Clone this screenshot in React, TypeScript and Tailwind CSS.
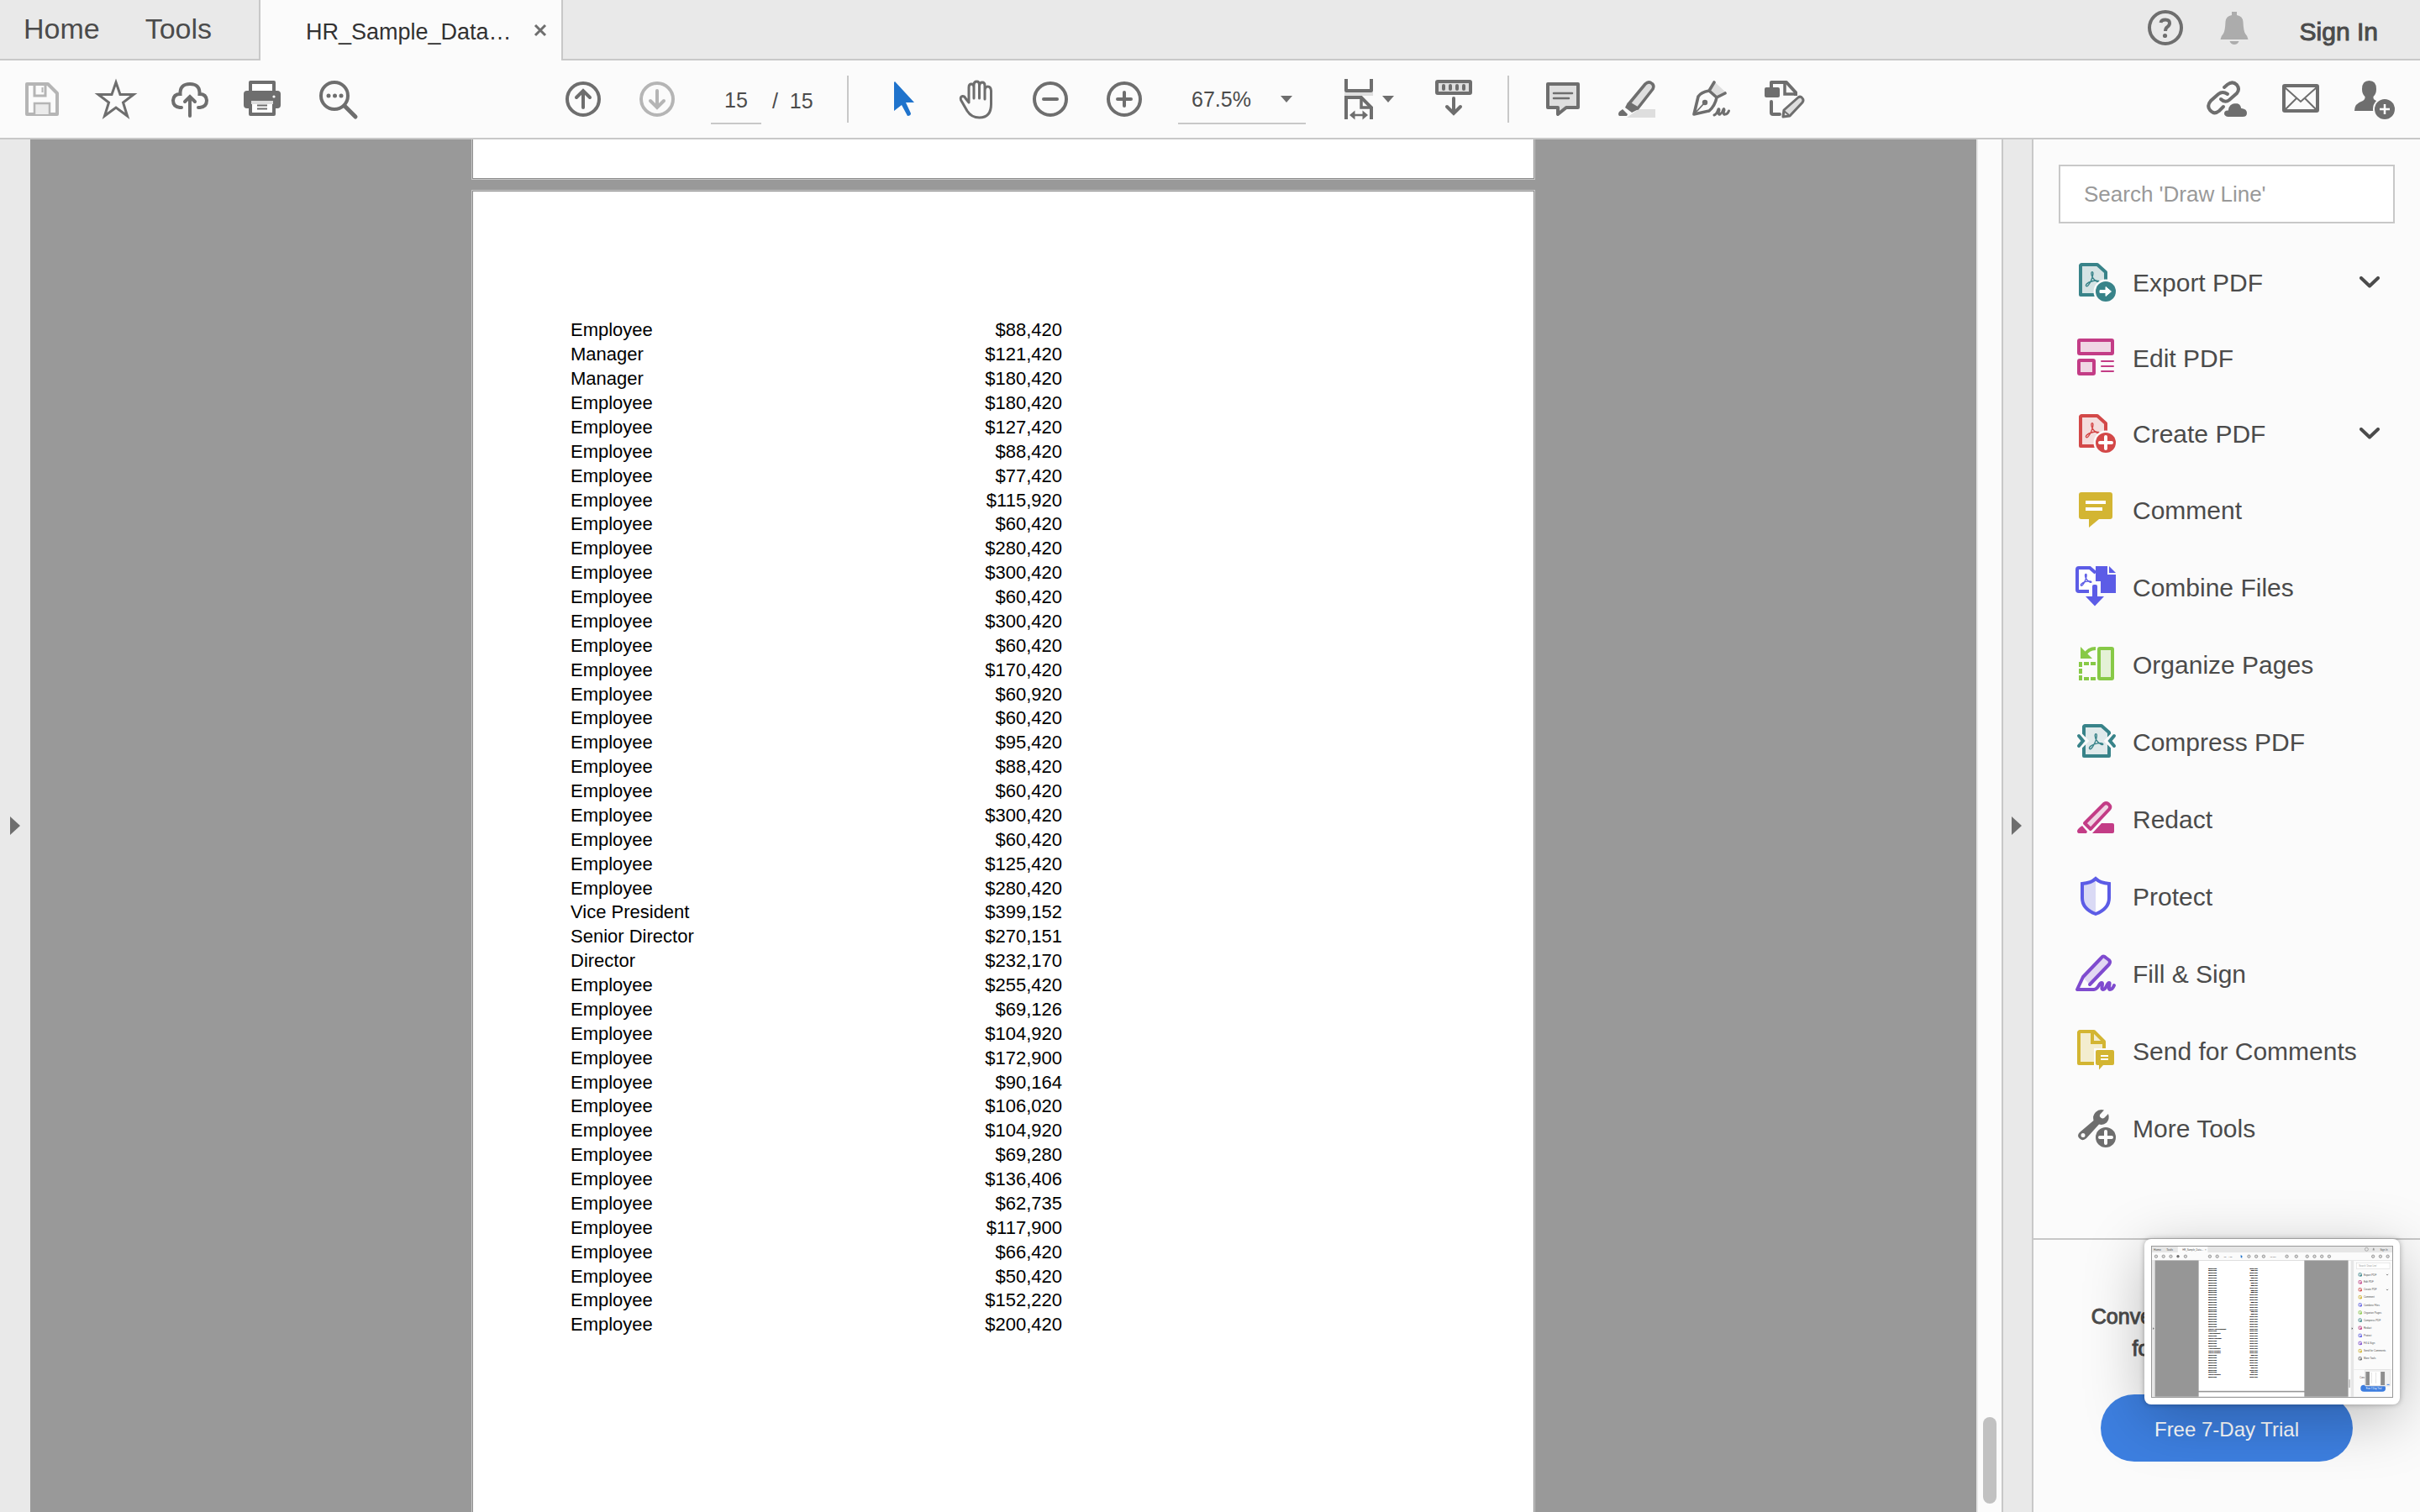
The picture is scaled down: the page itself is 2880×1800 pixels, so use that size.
import React from "react";

type IconProps = { children: React.ReactNode; className?: string };

function Icon({ children, className = "" }: IconProps) {
  return (
    <svg
      viewBox="0 0 48 48"
      className={"block size-12 shrink-0 overflow-visible " + className}
      fill="none"
      aria-hidden="true"
    >
      {children}
    </svg>
  );
}

function ToolButton({ label, children, disabled = false }: { label: string; children: React.ReactNode; disabled?: boolean }) {
  return (
    <button type="button" aria-label={label} disabled={disabled} className="size-12 shrink-0">
      <Icon>{children}</Icon>
    </button>
  );
}

const G = "#6e6e6e";
const L = "#dedede";

function Swirl({ color, x = 0, y = 0, s = 1 }: { color: string; x?: number; y?: number; s?: number }) {
  return (
    <path
      transform={`translate(${x} ${y}) scale(${s})`}
      d="M0.8 17.6C-0.6 16.2 2 13.6 7 12C11.600 10.600 16.200 10.800 16 12.400C15.800 14 10.800 11.400 8.400 7.400C6.600 4.200 6.400 0.600 8 0.600C9.800 0.600 8.600 6.400 6.600 11C4.600 15.400 2 18.800 0.800 17.600Z"
      stroke={color}
      strokeWidth={1.4 / s}
      strokeLinejoin="round"
    />
  );
}

function PdfDoc({ color, tint, children }: { color: string; tint: string; children: React.ReactNode }) {
  return (
    <>
      <path d="M7 3H26L36 12V39H6V4Z" fill={tint} stroke={color} strokeWidth="4" strokeLinejoin="round" />
      <Swirl color={color} x={12} y={11} />
      <circle cx="36" cy="35" r="14.500" fill="#fbfbfb" />
      <circle cx="36" cy="35" r="12" fill={color} />
      {children}
    </>
  );
}

const TEAL = "#388389";
const PINK = "#c33c86";
const RED = "#d34848";
const GOLD = "#d3b532";
const BLUE = "#5c5ce6";
const GREEN = "#87c947";
const PURPLE = "#7f4bcf";

const tools: { label: string; menu?: boolean; icon: React.ReactNode }[] = [
  {
    label: "Export PDF",
    menu: true,
    icon: (
      <PdfDoc color={TEAL} tint="#d5e3e4">
        <path d="M29 33.500H36V29.500L42.500 35L36 40.500V36.500H29Z" fill="#fff" stroke="#fff" strokeLinejoin="round" />
      </PdfDoc>
    ),
  },
  {
    label: "Edit PDF",
    icon: (
      <>
        <rect x="4" y="3" width="40" height="16" rx="1" fill="#f0d6e4" stroke={PINK} strokeWidth="4" />
        <rect x="4" y="27" width="18" height="16" rx="1" fill="#f0d6e4" stroke={PINK} strokeWidth="4" />
        <path d="M31 28H45M31 34H45M31 40H45" stroke={PINK} strokeWidth="2" strokeLinecap="round" />
      </>
    ),
  },
  {
    label: "Create PDF",
    menu: true,
    icon: (
      <PdfDoc color={RED} tint="#f4dddd">
        <path d="M36 28V42M29 35H43" stroke="#fff" strokeWidth="4" strokeLinecap="round" />
      </PdfDoc>
    ),
  },
  {
    label: "Comment",
    icon: (
      <>
        <path d="M7 3H41Q44 3 44 6V32Q44 35 41 35H28L16 45V35H7Q4 35 4 32V6Q4 3 7 3Z" fill={GOLD} />
        <path d="M12 15H36M12 23H32" stroke="#fff" strokeWidth="4" />
      </>
    ),
  },
  {
    label: "Combine Files",
    icon: (
      <>
        <path d="M16 29H4Q2 29 2 27V3Q2 1 4 1H17L24 7" stroke={BLUE} strokeWidth="4" fill="#fff" />
        <Swirl color={BLUE} x={6} y={8} s={0.8} />
        <path d="M24 -1H38V9H48V31H30V17H24Z" fill={BLUE} />
        <path d="M40 -1L48 7H40Z" fill={BLUE} />
        <path d="M20 23Q20 21 22 21H24Q26 21 26 23V35H34L23 46.500L12 35H20Z" fill={BLUE} />
      </>
    ),
  },
  {
    label: "Organize Pages",
    icon: (
      <>
        <rect x="28" y="5" width="16" height="36" rx="1" fill="#e4f1d6" stroke={GREEN} strokeWidth="4" />
        <path d="M6 3L11 8L20 17H6Z" fill={GREEN} />
        <path d="M24 5Q15 5 11 13" stroke={GREEN} strokeWidth="4" />
        <path
          d="M4 21h4v6h-4zM4 29h4v6h-4zM4 37h4v6h-4zM10 21h6v4h-6zM18 21h6v4h-6zM10 39h6v4h-6zM18 39h6v4h-6z"
          fill={GREEN}
        />
      </>
    ),
  },
  {
    label: "Compress PDF",
    icon: (
      <>
        <path d="M11 5H31L40 13V41H10V6Z" fill="#e0eaeb" stroke={TEAL} strokeWidth="4" strokeLinejoin="round" />
        <Swirl color={TEAL} x={16} y={14} s={1.05} />
        <path d="M3 16L10 23L3 30M47 16L40 23L47 30" stroke="#fbfbfb" strokeWidth="9" />
        <path d="M4 17L9 23L4 29M46 17L41 23L46 29" stroke={TEAL} strokeWidth="4" strokeLinecap="round" />
      </>
    ),
  },
  {
    label: "Redact",
    icon: (
      <>
        <path d="M11 29L34 6Q37 4 39.500 6.500Q42.500 9 40.500 12L18 36Z" fill="#f0d6e4" stroke={PINK} strokeWidth="4" strokeLinejoin="round" />
        <path d="M8 32L14 39L13 41H4Q2 41 2 38Q3 35 8 32Z" fill={PINK} />
        <path d="M20 41L31 29H44Q46 29 46 31V39Q46 41 44 41Z" fill={PINK} />
      </>
    ),
  },
  {
    label: "Protect",
    icon: (
      <>
        <path d="M24 3V45C16 42 8 36 8 26V9C14 8 20 7 24 3Z" fill="#dadaf5" />
        <path d="M24 3C28 7 34 8 40 9V26C40 36 32 42 24 45Z" fill="#fff" />
        <path d="M24 3C20 7 14 8.500 8 9V26C8 36 16 42 24 45C32 42 40 36 40 26V9C34 8.500 28 7 24 3Z" stroke={BLUE} strokeWidth="4" />
      </>
    ),
  },
  {
    label: "Fill & Sign",
    icon: (
      <>
        <path d="M9 29L31 5Q33 2 36 5L40 8Q42 10 40 13L17 37" fill="#e2d8f2" />
        <path
          d="M17 37L40 13Q42 10 40 8L36 5Q33 2 31 5L9 28L2 43H22C27 43 28 35 31 35C34 35 29 43 33 43C37 43 37 35 40 35C42 35 38 43 41 43Q44 43 46 38"
          stroke={PURPLE}
          strokeWidth="4"
          strokeLinecap="round"
          strokeLinejoin="round"
        />
      </>
    ),
  },
  {
    label: "Send for Comments",
    icon: (
      <>
        <path d="M5 1H22L34 13V39H4V2Z" fill="#f3edcf" stroke={GOLD} strokeWidth="4" strokeLinejoin="round" />
        <path d="M20 1V14H34" stroke={GOLD} strokeWidth="4" />
        <path d="M22 21H48V43H22Z" fill="#fbfbfb" />
        <path d="M26 23H44Q46 23 46 25V39Q46 41 44 41H33L28 46.500V41H26Q24 41 24 39V25Q24 23 26 23Z" fill={GOLD} />
        <path d="M30 30H39M30 34H39" stroke="#fff" strokeWidth="2" />
      </>
    ),
  },
  {
    label: "More Tools",
    icon: (
      <>
        <path
          d="M34 2.500L29 8Q28 10 30 11.500Q32 13 34 12L39 7Q41 13 37 17.500Q33 21 28 19.500L13 36Q9 40 5 36.500Q1 33 5 29L21.500 15Q20 9 24 5Q28 1 34 2.500ZM9 30A2.500 2.500 0 1 0 9 35A2.500 2.500 0 1 0 9 30Z"
          fill={G}
          fillRule="evenodd"
        />
        <circle cx="36" cy="35" r="14" fill="#fbfbfb" />
        <circle cx="36" cy="35" r="12" fill={G} />
        <path d="M36 28V42M29 35H43" stroke="#fff" strokeWidth="4" strokeLinecap="round" />
      </>
    ),
  },
];

const rows: [string, string][] = [
  ["Employee", "$88,420"],
  ["Manager", "$121,420"],
  ["Manager", "$180,420"],
  ["Employee", "$180,420"],
  ["Employee", "$127,420"],
  ["Employee", "$88,420"],
  ["Employee", "$77,420"],
  ["Employee", "$115,920"],
  ["Employee", "$60,420"],
  ["Employee", "$280,420"],
  ["Employee", "$300,420"],
  ["Employee", "$60,420"],
  ["Employee", "$300,420"],
  ["Employee", "$60,420"],
  ["Employee", "$170,420"],
  ["Employee", "$60,920"],
  ["Employee", "$60,420"],
  ["Employee", "$95,420"],
  ["Employee", "$88,420"],
  ["Employee", "$60,420"],
  ["Employee", "$300,420"],
  ["Employee", "$60,420"],
  ["Employee", "$125,420"],
  ["Employee", "$280,420"],
  ["Vice President", "$399,152"],
  ["Senior Director", "$270,151"],
  ["Director", "$232,170"],
  ["Employee", "$255,420"],
  ["Employee", "$69,126"],
  ["Employee", "$104,920"],
  ["Employee", "$172,900"],
  ["Employee", "$90,164"],
  ["Employee", "$106,020"],
  ["Employee", "$104,920"],
  ["Employee", "$69,280"],
  ["Employee", "$136,406"],
  ["Employee", "$62,735"],
  ["Employee", "$117,900"],
  ["Employee", "$66,420"],
  ["Employee", "$50,420"],
  ["Employee", "$152,220"],
  ["Employee", "$200,420"],
];

const previewTitles: Record<number, string> = {
  25: "Senior Vice President",
  27: "Vice President",
  29: "Senior Manager",
  33: "Vice President",
  34: "Senior Director",
  35: "Senior Director",
  44: "Senior Director",
};
const previewShort = [1, 4, 6, 7, 9, 10, 14, 18, 19, 36, 41, 43];

function PreviewPicture() {
  const icons = [50, 138, 226, 312, 402, 694, 782, 1162, 1250, 1338, 1617, 1730, 1860, 1948, 2036, 2124, 2650, 2738, 2826];
  const colors = [TEAL, PINK, RED, GOLD, BLUE, GREEN, TEAL, PINK, BLUE, PURPLE, GOLD, G];
  return (
    <svg viewBox="0 0 2880 1800" className="block w-full" fontFamily="'Liberation Sans', Arial, sans-serif" role="img" aria-label="Screen preview">
      <rect width="2880" height="1800" fill="#fbfbfb" />
      <rect width="2880" height="70" fill="#e6e6e6" />
      <rect x="310" width="358" height="72" fill="#fbfbfb" />
      <g fill="#4b4b4b">
        <text x="20" y="46" fontSize="34">Home</text>
        <text x="173" y="46" fontSize="34">Tools</text>
        <text x="364" y="48" fontSize="28">HR_Sample_Data…</text>
        <text x="634" y="46" fontSize="28">×</text>
        <text x="2733" y="48" fontSize="30">Sign In</text>
        <text x="862" y="128" fontSize="25">15</text>
        <text x="918" y="128" fontSize="25">/ 15</text>
        <text x="1417" y="128" fontSize="25">67.5%</text>
      </g>
      {icons.map((x, i) => (
        <circle key={x} cx={x} cy="118" r={i === 3 ? 14 : 17} stroke="#777" strokeWidth="7" fill={i === 3 ? "#666" : "#ddd"} />
      ))}
      <path d="M1064 97L1088 121L1078 122L1082 138L1064 132Z" fill="#1f73cc" />
      <circle cx="2572" cy="33" r="20" stroke="#777" strokeWidth="5" fill="none" />
      <path d="M2644 45L2650 18H2662L2668 45Z" fill="#999" />
      <rect y="164" width="2880" height="4" fill="#c8c8c8" />
      <rect y="166" width="36" height="1634" fill="#e6e6e6" />
      <rect x="36" y="166" width="2316" height="1634" fill="#969696" />
      <rect x="560" y="166" width="1266" height="1564" fill="#fff" />
      <rect x="560" y="1746" width="1266" height="54" fill="#fff" />
      <rect x="2384" y="166" width="34" height="1634" fill="#e6e6e6" />
      <rect x="2360" y="1590" width="16" height="104" rx="8" fill="#bbb" />
      <path d="M12 968L26 983L12 998ZM2394 968L2408 983L2394 998Z" fill="#555" />
      <g fontSize="22" fill="#111" stroke="#111" strokeWidth="1.500">
        {Array.from({ length: 46 }, (_, i) => (
          <g key={i}>
            <text x="678" y={268 + i * 29}>{previewTitles[i] ?? "Employee"}</text>
            <text x="1265" y={268 + i * 29} textAnchor="end">{previewShort.includes(i) ? "$88,420" : "$190,420"}</text>
          </g>
        ))}
      </g>
      <rect x="2450" y="196" width="400" height="68" fill="#fff" stroke="#ccc" strokeWidth="4" />
      <text x="2480" y="240" fontSize="26" fill="#999">Search 'Draw Line'</text>
      {tools.map((t, i) => {
        const y = i < 3 ? 337 + i * 90 : 607 + (i - 3) * 92;
        return (
          <g key={t.label}>
            <rect x="2478" y={y - 18} width="32" height="34" rx="6" stroke={colors[i]} strokeWidth="8" fill="#eee" />
            <rect x="2496" y={y} width="20" height="20" rx="8" fill={colors[i]} />
            <text x="2537" y={y + 11} fontSize="30" fill="#4b4b4b">{t.label}</text>
            {t.menu && <path d={`M2808 ${y - 5}L2820 ${y + 6}L2832 ${y - 5}`} stroke="#555" strokeWidth="7" fill="none" />}
          </g>
        );
      })}
      <rect x="2420" y="1474" width="460" height="3" fill="#c8c8c8" />
      <text x="2490" y="1576" fontSize="26" fill="#4b4b4b">Conve</text>
      <rect x="2500" y="1660" width="300" height="80" rx="40" fill="#3d7ddf" />
      <text x="2565" y="1709" fontSize="26" fill="#fff">Free 7-Day Trial</text>
      <rect x="2552" y="1476" width="304" height="196" rx="10" fill="#f2f2f2" stroke="#d8d8d8" strokeWidth="6" />
      <path d="M2562 1500H2608V1662H2562ZM2740 1500H2790V1662H2740Z" fill="#8e8e8e" />
      <path d="M2608 1500H2740V1662H2608Z" fill="#fff" />
      <path d="M2632 1510V1640M2684 1510V1640" stroke="#aaa" strokeWidth="5" strokeDasharray="6 3" />
      <rect x="2816" y="1650" width="30" height="10" fill="#3d7ddf" />
    </svg>
  );
}

function Header() {
  return (
    <header className="flex h-[72px] shrink-0 bg-[#e9e9e9] text-[#4b4b4b]">
      <nav className="flex w-[308px] items-start gap-[54px] border-b-2 border-[#c8c8c8] pl-7 text-[34px] leading-[68px]">
        <button type="button">Home</button>
        <button type="button">Tools</button>
      </nav>
      <div className="flex w-[362px] items-center border-x-2 border-[#c8c8c8] bg-[#fbfbfb] pt-1 pl-[54px] text-[27px] text-[#323232]">
        <button type="button" className="w-[270px] text-left whitespace-nowrap">HR_Sample_Data…</button>
        <button type="button" aria-label="Close tab" className="pb-1">
          <svg viewBox="0 0 18 18" className="size-[18px]" aria-hidden="true">
            <path d="M3 3L15 15M15 3L3 15" stroke={G} strokeWidth="3" />
          </svg>
        </button>
      </div>
      <div className="flex flex-1 items-center justify-end gap-[34px] border-b-2 border-[#c8c8c8] pr-[50px]">
        <button type="button" aria-label="Help" className="mb-1">
          <Icon>
            <circle cx="24" cy="24" r="19" stroke={G} strokeWidth="4" />
            <path d="M18.500 18Q19 14.500 24 14.500Q29 14.500 29 18.500Q29 21 26.500 22.800Q24 24.500 24 28" stroke={G} strokeWidth="4" />
            <circle cx="23.500" cy="33.500" r="2.600" fill={G} />
          </Icon>
        </button>
        <button type="button" aria-label="Notifications" className="mb-1">
          <Icon>
            <path d="M21 5H27V9Q34 10 34.500 17Q35 28 37 31Q40 34 40.500 38H7.500Q8 34 11 31Q13 28 13.500 17Q14 10 21 9Z" fill="#acacac" />
            <path d="M18.500 40H29.500Q28 44 24 44Q20 44 18.500 40Z" fill="#acacac" />
          </Icon>
        </button>
        <button type="button" className="ml-5 pt-1 text-[30px] [-webkit-text-stroke:1px]">Sign In</button>
      </div>
    </header>
  );
}

function Toolbar() {
  return (
    <div role="toolbar" aria-label="Document tools" className="flex h-[94px] shrink-0 items-center border-b-2 border-[#c8c8c8] bg-[#fbfbfb] pr-[30px] pl-[26px]">
      <div className="flex gap-10">
        <ToolButton label="Save" disabled>
          <path d="M6 6H31L42 17V42H6Z" stroke="#b5b5b5" strokeWidth="4" strokeLinejoin="round" />
          <path d="M15 6V20H28V6" stroke="#b5b5b5" strokeWidth="3" />
          <path d="M24.500 10V16" stroke="#b5b5b5" strokeWidth="2" />
          <path d="M15 42V29H33V42" fill="#ebebeb" stroke="#b5b5b5" strokeWidth="2.500" />
        </ToolButton>
        <ToolButton label="Bookmark">
          <path d="M24 4L29 18.500H45L32.500 28L37.500 44L24 34L10.500 44L15.500 28L3 18.500H19Z" stroke={G} strokeWidth="3" />
        </ToolButton>
        <ToolButton label="Upload">
          <path d="M14 34H12Q4 33 4 25.500Q4.500 18 12.500 18Q12 6 24 6Q36 6 35.500 18Q43.500 18 44 25.500Q44 33 36 34H34" stroke={G} strokeWidth="4" strokeLinecap="round" />
          <path d="M24 44V22M18 27L24 21L30 27" stroke={G} strokeWidth="4" strokeLinecap="round" />
        </ToolButton>
        <ToolButton label="Print">
          <rect x="0" y="14" width="44" height="21" rx="4" fill={G} />
          <path d="M8 15V4H36V15" fill="#fff" stroke={G} strokeWidth="4" strokeLinejoin="round" />
          <path d="M6 14H38V17H6Z" fill={G} />
          <circle cx="36" cy="21" r="1.600" fill="#fff" />
          <rect x="8" y="26" width="28" height="16" fill="#fff" stroke={G} strokeWidth="4" strokeLinejoin="round" />
          <path d="M9 26H35V30H9Z" fill={L} />
          <path d="M16 31.500H28M16 35.500H28" stroke={G} strokeWidth="2" />
        </ToolButton>
        <ToolButton label="Find">
          <circle cx="20" cy="20" r="16" stroke={G} strokeWidth="4" />
          <path d="M32 32L45 45" stroke={G} strokeWidth="5" strokeLinecap="round" />
          <circle cx="13" cy="20" r="2.500" fill={G} />
          <circle cx="20.500" cy="20" r="2.500" fill={G} />
          <circle cx="28" cy="20" r="2.500" fill={G} />
        </ToolButton>
      </div>

      <div className="ml-[244px] flex items-center">
        <div className="flex gap-10">
          <ToolButton label="Previous page">
            <circle cx="24" cy="24" r="19" stroke={G} strokeWidth="4" />
            <path d="M24 34V15M16 22L24 14L32 22" stroke={G} strokeWidth="4" strokeLinecap="round" />
          </ToolButton>
          <ToolButton label="Next page" disabled>
            <circle cx="24" cy="24" r="19" stroke="#b5b5b5" strokeWidth="4" />
            <path d="M24 14V33M16 26L24 34L32 26" stroke="#b5b5b5" strokeWidth="4" strokeLinecap="round" />
          </ToolButton>
        </div>
        <input aria-label="Page number" defaultValue="15" className="ml-10 h-[60px] w-[60px] border-b-2 border-[#c8c8c8] bg-transparent pt-1 text-center text-[25px] text-[#4b4b4b] outline-none" />
        <span className="ml-[13px] w-[89px] pt-[6px] text-[25px] whitespace-pre text-[#4b4b4b]">/  15</span>
        <div className="h-14 w-[2px] bg-[#c8c8c8]" />
        <div className="ml-10 flex gap-10">
          <ToolButton label="Select">
            <path d="M15 3L38 28H28L34 41Q34 44 30 44L23 31L14 38V4Z" fill="#1f73cc" />
          </ToolButton>
          <ToolButton label="Pan">
            <path
              d="M13 28V10Q13 6 16 6Q19 6 19 10V23V7Q19 3 22.500 3Q25.500 3 25.500 7V23V8Q26 4 29 4Q32 4 32 8V24V14Q32 9 35.500 9Q39 9 39.500 14V30Q39.500 46 25.500 46Q16 46 11 38L3.500 25Q2.500 21 5.500 20.500Q8 20.500 9 23L13 28Z"
              transform="translate(2 0)"
              stroke={G}
              strokeWidth="3"
              strokeLinejoin="round"
            />
          </ToolButton>
          <ToolButton label="Zoom out">
            <circle cx="24" cy="24" r="19" stroke={G} strokeWidth="4" />
            <path d="M16 24H32" stroke={G} strokeWidth="4" strokeLinecap="round" />
          </ToolButton>
          <ToolButton label="Zoom in">
            <circle cx="24" cy="24" r="19" stroke={G} strokeWidth="4" />
            <path d="M16 24H32M24 16V32" stroke={G} strokeWidth="4" strokeLinecap="round" />
          </ToolButton>
        </div>
        <div className="relative ml-10">
          <select aria-label="Zoom level" defaultValue="67.5%" className="block h-[60px] w-[152px] appearance-none border-b-2 border-[#c8c8c8] bg-transparent pt-1 pl-4 text-[25px] text-[#4b4b4b] outline-none">
            <option>67.5%</option>
            <option>100%</option>
          </select>
          <svg viewBox="0 0 16 10" className="pointer-events-none absolute top-[25px] right-[15px] h-[10px] w-4" aria-hidden="true">
            <path d="M1 1H15L8 9Z" fill={G} />
          </svg>
        </div>
        <button type="button" aria-label="Page fit" className="ml-[46px] flex items-center">
          <Icon>
            <path d="M2 0V14H32V0" stroke={G} strokeWidth="4" strokeLinejoin="round" />
            <path d="M0 16H34V20H0Z" fill={L} />
            <path d="M2 48V22H20L32 34V48" stroke={G} strokeWidth="4" />
            <path d="M20 22V34H32" stroke={G} strokeWidth="3.500" />
            <path d="M12 43H22" stroke={G} strokeWidth="2.500" />
            <path d="M6 43L12.500 37.500V48.500ZM28 43L21.500 37.500V48.500Z" fill={G} />
          </Icon>
          <svg viewBox="0 0 16 10" className="-ml-1 h-[10px] w-4" aria-hidden="true">
            <path d="M1 1H15L8 9Z" fill={G} />
          </svg>
        </button>
        <div className="ml-[46px]">
          <ToolButton label="Scrolling mode">
            <rect x="4" y="6" width="40" height="14" rx="1" fill={L} stroke={G} strokeWidth="4" />
            <path d="M12 11V15M20 11V15M28 11V15M36 11V15" stroke={G} strokeWidth="4" strokeLinecap="round" />
            <path d="M24 26V43M16 36L24 44L32 36" stroke={G} strokeWidth="4" strokeLinecap="round" />
          </ToolButton>
        </div>
        <div className="mx-10 h-14 w-[2px] bg-[#c8c8c8]" />
        <div className="flex gap-10">
          <ToolButton label="Comment">
            <path d="M6 6H42V34H28L18 42V34H6Z" fill={L} stroke={G} strokeWidth="4" strokeLinejoin="round" />
            <path d="M13 17H35M13 23H31" stroke={G} strokeWidth="2.500" strokeLinecap="round" />
          </ToolButton>
          <ToolButton label="Highlight">
            <path d="M12 46L26 36H46V46Z" fill={L} />
            <path d="M15 29L34 6Q38 2 42 5.500Q45 8 43 12L25 35Z" fill={L} stroke={G} strokeWidth="3.600" strokeLinejoin="round" />
            <path d="M13 28L26 36L18 40L10 34Z" fill={G} />
            <path d="M7 36L13 42L12 44H3Q1 42 3 39Z" fill={G} />
          </ToolButton>
          <ToolButton label="Sign">
            <path d="M28 3L42 16L32 22L22 13Z" fill={L} />
            <path d="M28 4L22 14Q12 16 9 21L4 42L22 38Q29 32 31 22L22 14M31 22L41 17" stroke={G} strokeWidth="3.600" strokeLinecap="round" strokeLinejoin="round" />
            <path d="M5 41L16 29" stroke={G} strokeWidth="1.800" />
            <circle cx="17" cy="28" r="3.200" fill={G} />
            <path d="M28 43Q31 42 33 36Q34 35 34 37Q32 43 35 42Q38 40 39 36Q40 35 40 37Q38 43 41 42Q44 42 45.500 38" stroke={G} strokeWidth="3" strokeLinecap="round" />
          </ToolButton>
          <ToolButton label="Edit page">
            <path d="M8 10V4H26L37 16V20" stroke={G} strokeWidth="4" strokeLinejoin="round" />
            <path d="M24 4V18H36" stroke={G} strokeWidth="3.500" />
            <rect x="0" y="10" width="18" height="12" rx="2" fill={G} />
            <path d="M8 27V40Q8 42 10 42H18" stroke={G} strokeWidth="4" strokeLinecap="round" />
            <path d="M22 45L23 37L40 22Q43 20 45 23Q47 25 45 28L30 44Z" fill={L} stroke={G} strokeWidth="3" strokeLinejoin="round" />
            <path d="M23 38L29 43" stroke={G} strokeWidth="2" />
          </ToolButton>
        </div>
      </div>

      <div className="ml-auto flex gap-10">
        <ToolButton label="Share link">
          <g stroke={G} strokeWidth="4" strokeLinecap="round">
            <path d="M21 10L25 6.500Q31 2 36 7Q40 12 36 17L27 25Q22 29 17 24" />
            <path d="M25 18Q19 14 14 18L5 26Q0 32 4 37Q9 43 15 38L20 33" />
          </g>
          <path d="M25 46Q20 45 20 41Q20 37 25 36.500Q26 29 34 28Q41 28 42 34Q49 35 49 40.500Q49 46 43 46Z" fill={G} stroke="#fbfbfb" strokeWidth="2" />
        </ToolButton>
        <ToolButton label="Email">
          <rect x="4" y="8" width="40" height="30" rx="1" stroke={G} strokeWidth="4" />
          <path d="M5 10L24 27L43 10M5 37L19 23M43 37L29 23" stroke={G} strokeWidth="2" />
        </ToolButton>
        <ToolButton label="Add people">
          <path d="M9 12Q9 2 17.500 2Q26 2 26 12Q26 18 22.500 21Q22 24 25 25.500Q34 28 35 38H0Q0 29 10 26Q13 24 12.500 21Q9 18 9 12Z" fill={G} />
          <circle cx="36" cy="36" r="14" fill="#fbfbfb" />
          <circle cx="36" cy="36" r="12" fill={G} />
          <path d="M36 30V42M30 36H42" stroke="#fff" strokeWidth="2.500" />
        </ToolButton>
      </div>
    </div>
  );
}

function PaneToggle({ label, className }: { label: string; className: string }) {
  return (
    <button type="button" aria-label={label} className={"flex shrink-0 items-center bg-[#e9e9e9] " + className}>
      <svg viewBox="0 0 12 22" className="h-[22px] w-3" aria-hidden="true">
        <path d="M0 0L12 11L0 22Z" fill={G} />
      </svg>
    </button>
  );
}

function DocumentView() {
  return (
    <main className="flex min-w-0 flex-1 flex-col items-center gap-3 overflow-hidden bg-[#999999]">
      <div className="h-12 w-[1266px] shrink-0 border border-t-0 border-[#c8c8c8] bg-[#8c8c8c] px-px pb-px">
        <div className="h-full bg-white" />
      </div>
      <div className="w-[1266px] flex-1 border border-b-0 border-[#c8c8c8] bg-[#8c8c8c] px-px pt-px">
        <div className="h-full bg-white pt-[151px] pl-[116px]">
          <table className="h-[1213px] w-[585px] border-collapse text-[22px] leading-7 text-black">
            <tbody>
              {rows.map(([title, pay], i) => (
                <tr key={i}>
                  <td className="p-0 text-left">{title}</td>
                  <td className="p-0 text-right">{pay}</td>
                </tr>
              ))}
            </tbody>
          </table>
        </div>
      </div>
    </main>
  );
}

function ToolsPanel() {
  return (
    <aside className="flex w-[462px] shrink-0 flex-col border-l-2 border-[#c8c8c8] bg-[#fbfbfb] text-[#4b4b4b]">
      <div className="px-[30px] pt-[30px]">
        <input
          aria-label="Search tools"
          placeholder="Search 'Draw Line'"
          className="block h-[70px] w-full border-2 border-[#c8c8c8] bg-white px-7 text-[26px] outline-none placeholder:text-[#999999]"
        />
      </div>
      <ul className="flex-1 px-[30px] pt-[25px]">
        {tools.map((t, i) => (
          <li key={t.label} className={i < 3 ? "h-[90px]" : "h-[92px]"}>
            <button type="button" className="flex size-full items-center gap-5 pr-[18px] pl-5 text-left text-[30px]">
              <Icon>{t.icon}</Icon>
              <span className="flex-1 whitespace-nowrap">{t.label}</span>
              {t.menu && (
                <svg viewBox="0 0 24 14" className="h-[14px] w-6" fill="none" aria-hidden="true">
                  <path d="M2 2L12 11.500L22 2" stroke="#4b4b4b" strokeWidth="4" strokeLinecap="round" strokeLinejoin="round" />
                </svg>
              )}
            </button>
          </li>
        ))}
      </ul>
      <section className="relative flex flex-col items-center border-t-2 border-[#c8c8c8] pt-[72px] pb-[60px]">
        <p className="w-[360px] text-center text-[25px] leading-[38px] [-webkit-text-stroke:1px]">
          Convert, edit and e-sign PDF
          <br />
          forms &amp; agreements
        </p>
        <button type="button" className="mt-9 h-20 w-[300px] rounded-full bg-[#3d7fe0] pt-1 text-[24px] text-white">
          Free 7-Day Trial
        </button>
        <div className="absolute right-6 bottom-32 w-[304px] rounded-lg bg-white p-2 shadow-[0_0_6px_rgba(0,0,0,0.3),0_16px_70px_rgba(0,0,0,0.25)]">
          <div className="border border-[#999999]">
            <PreviewPicture />
          </div>
        </div>
      </section>
    </aside>
  );
}

export default function App() {
  return (
    <div className="flex h-screen flex-col overflow-hidden bg-[#fbfbfb] font-['Liberation_Sans',Arial,sans-serif]">
      <Header />
      <Toolbar />
      <div className="flex min-h-0 flex-1">
        <PaneToggle label="Open navigation pane" className="w-9 pl-3" />
        <DocumentView />
        <div className="flex w-8 shrink-0 flex-col items-center border-x-2 border-r-[#c8c8c8] border-l-[#e6e6e6] bg-[#fbfbfb]">
          <div className="mt-auto mb-[10px] h-[103px] w-4 rounded-full bg-[#c1c1c1]" />
        </div>
        <PaneToggle label="Collapse tools pane" className="w-[34px] pl-[10px]" />
        <ToolsPanel />
      </div>
    </div>
  );
}
